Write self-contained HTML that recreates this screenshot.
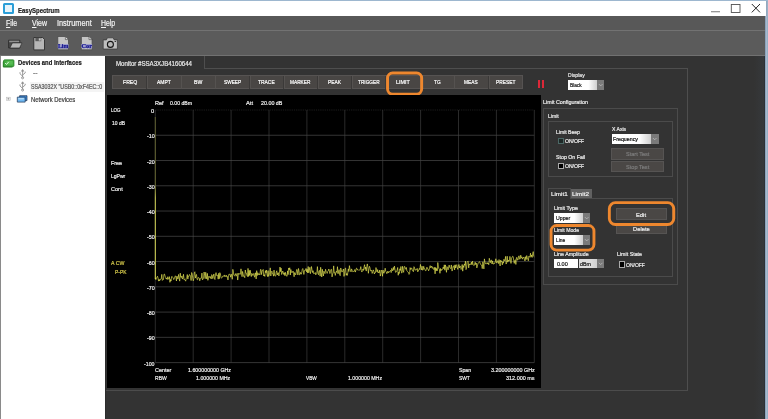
<!DOCTYPE html>
<html><head><meta charset="utf-8"><title>EasySpectrum</title>
<style>
html,body{margin:0;padding:0;}
body{width:768px;height:419px;overflow:hidden;position:relative;background:#333333;font-family:"Liberation Sans", sans-serif;}
.a{position:absolute;}
.t{white-space:nowrap;transform-origin:0 50%;-webkit-text-stroke:0.2px currentColor;}
svg{overflow:visible;display:block;}
#w{position:absolute;left:0;top:0;width:768px;height:419px;filter:blur(0.5px);}
</style></head><body>
<div id="w">
<div class="a" style="left:-8px;top:-8px;width:784px;height:435px;background:#333333;"></div>
<div class="a" style="left:-8px;top:-8px;width:784px;height:23.6px;background:#ffffff;"></div>
<div class="a" style="left:-8px;top:-8px;width:784px;height:8.8px;background:#9db7cf;"></div>
<div class="a" style="left:3px;top:3.2px;width:11px;height:10.8px;background:#e6f3fa;border:2px solid #2b9ed8;box-sizing:border-box;border-radius:1.5px;"></div>
<div class="a t" style="left:17.50px;top:6px;font-size:7px;line-height:9px;color:#222;font-weight:bold;transform:scaleX(0.8553);">EasySpectrum</div>
<svg class="a" style="left:704px;top:0" width="64" height="16" viewBox="0 0 64 16">
<line x1="7" y1="11.7" x2="16" y2="11.7" stroke="#8c8c8c" stroke-width="1.2"/>
<rect x="27.3" y="4.5" width="8.7" height="8" fill="none" stroke="#505050" stroke-width="0.9"/>
<path d="M47.8 4 L56 12.4 M56 4 L47.8 12.4" stroke="#1a1a1a" stroke-width="0.95" fill="none"/>
</svg>
<div class="a" style="left:-8px;top:15.6px;width:784px;height:15.4px;background:#585858;"></div>
<div class="a" style="left:-8px;top:30px;width:784px;height:1px;background:#727272;"></div>
<div class="a t" style="left:6.30px;top:18px;font-size:8.4px;line-height:10.4px;color:#f2f2f2;transform:scaleX(0.8287);"><u>F</u>ile</div>
<div class="a t" style="left:32.20px;top:18px;font-size:8.4px;line-height:10.4px;color:#f2f2f2;transform:scaleX(0.8326);"><u>V</u>iew</div>
<div class="a t" style="left:57.00px;top:18px;font-size:8.4px;line-height:10.4px;color:#f2f2f2;transform:scaleX(0.8767);">Instrument</div>
<div class="a t" style="left:101.30px;top:18px;font-size:8.4px;line-height:10.4px;color:#f2f2f2;transform:scaleX(0.8232);"><u>H</u>elp</div>
<div class="a" style="left:-8px;top:31px;width:784px;height:24px;background:#5b5b5b;"></div>
<div class="a" style="left:-8px;top:55px;width:784px;height:1px;background:#717171;"></div>
<svg class="a" style="left:0;top:31px" width="128" height="25" viewBox="0 31 128 25">
<path d="M8.6 40.2 H19.8 V48 H8.6 Z" fill="#484848" stroke="#2a2a2a" stroke-width="0.8"/>
<rect x="9.2" y="40.7" width="10" height="1.5" fill="#909090"/>
<path d="M9.9 48 L12.4 42.9 L22 42.9 L19.6 48 Z" fill="#b6b6b6" stroke="#2c2c2c" stroke-width="0.7" stroke-linejoin="round"/>
<path d="M33.8 37.5 L42.6 37.5 L44.5 39.4 L44.5 49.9 L33.8 49.9 Z" fill="#b6b6b6" stroke="#2c2c2c" stroke-width="0.9"/>
<rect x="35.4" y="37.8" width="5.8" height="3.4" fill="#5a5a5a"/>
<rect x="38.8" y="38.3" width="2" height="2.3" fill="#c4c4c4"/>
<path d="M57.8 36.5 L65.4 36.5 L68.5 39.6 L68.5 49.8 L57.8 49.8 Z" fill="#c4c4c4" stroke="#444" stroke-width="0.7"/>
<path d="M65.4 36.5 L65.4 39.6 L68.5 39.6 Z" fill="#e4e4e4" stroke="#444" stroke-width="0.6"/>
<rect x="57.8" y="44" width="10.7" height="4.2" fill="#9c9ccc"/>
<text x="63.15" y="48" font-family="Liberation Serif, serif" font-weight="bold" font-size="6.4" fill="#14148c" stroke="#14148c" stroke-width="0.25" text-anchor="middle" textLength="10.4" lengthAdjust="spacingAndGlyphs">Lim</text>
<path d="M81.4 36.5 L89 36.5 L92.1 39.6 L92.1 49.8 L81.4 49.8 Z" fill="#c4c4c4" stroke="#444" stroke-width="0.7"/>
<path d="M89 36.5 L89 39.6 L92.1 39.6 Z" fill="#e4e4e4" stroke="#444" stroke-width="0.6"/>
<rect x="81.4" y="44" width="10.7" height="4.2" fill="#9c9ccc"/>
<text x="86.75" y="48" font-family="Liberation Serif, serif" font-weight="bold" font-size="6.4" fill="#14148c" stroke="#14148c" stroke-width="0.25" text-anchor="middle" textLength="10.4" lengthAdjust="spacingAndGlyphs">Cor</text>
<path d="M103.2 39.9 L106.4 39.9 L107.4 37.8 L113.2 37.8 L114.2 39.9 L117.4 39.9 L117.4 49 L103.2 49 Z" fill="#bebebe" stroke="#3a3a3a" stroke-width="0.75" stroke-linejoin="round"/>
<circle cx="110.4" cy="44.4" r="3" fill="#b8b8b8" stroke="#141414" stroke-width="1.1"/>
<rect x="114.6" y="41" width="1.5" height="1" fill="#333"/>
</svg>
<div class="a" style="left:-8px;top:56px;width:112.6px;height:372px;background:#ffffff;"></div>
<div class="a" style="left:-8px;top:56px;width:9.4px;height:372px;background:#8a8a8a;"></div>
<div class="a" style="left:104.6px;top:56px;width:1px;height:372px;background:#2c2c2c;"></div>
<div class="a t" style="left:17.50px;top:59px;font-size:6.8px;line-height:8.8px;color:#1a1a1a;font-weight:bold;transform:scaleX(0.8646);">Devices and Interfaces</div>
<div class="a t" style="left:32.50px;top:69px;font-size:6.4px;line-height:8.4px;color:#777;transform:scaleX(1.0549);">--</div>
<div class="a" style="left:30px;top:81.5px;width:74px;height:10px;background:#f4f4f4;"></div>
<div class="a t" style="left:30.80px;top:83px;font-size:6.6px;line-height:8.6px;color:#555;transform:scaleX(0.8047);">SSA3032X "USB0::0xF4EC::0</div>
<div class="a t" style="left:30.80px;top:96px;font-size:6.6px;line-height:8.6px;color:#3a3a3a;transform:scaleX(0.8935);">Network Devices</div>
<svg class="a" style="left:0;top:56px" width="40" height="52" viewBox="0 56 40 52">
<rect x="2.8" y="61" width="10" height="6.4" rx="1" fill="#2f8a2f"/>
<rect x="3.6" y="59.8" width="10.4" height="6.8" rx="1" fill="#42ab3f" stroke="#2c7f2c" stroke-width="0.7"/>
<rect x="6.4" y="61" width="6.4" height="3.6" fill="#5cc058" opacity="0.8"/>
<path d="M5.2 63 L6.5 64.5 L8.8 61.8" stroke="#f0fff0" stroke-width="0.9" fill="none"/>
<g stroke="#8e8e8e" stroke-width="0.85" fill="none">
<path d="M22.6 70.6 L22.6 77.4"/><path d="M22.6 76.2 L20 73.8 L20 72.2"/><path d="M22.6 75 L25.2 72.9 L25.2 71.6"/>
<circle cx="22.6" cy="77.8" r="1.05"/>
<path d="M21.6 71.2 L22.6 69.6 L23.6 71.2 Z" fill="#8e8e8e"/>
</g>
<g stroke="#8e8e8e" stroke-width="0.85" fill="none" transform="translate(0,12.2)">
<path d="M22.6 70.6 L22.6 77.4"/><path d="M22.6 76.2 L20 73.8 L20 72.2"/><path d="M22.6 75 L25.2 72.9 L25.2 71.6"/>
<circle cx="22.6" cy="77.8" r="1.05"/>
<path d="M21.6 71.2 L22.6 69.6 L23.6 71.2 Z" fill="#8e8e8e"/>
</g>
<rect x="6.6" y="97.2" width="3.6" height="3.2" fill="#f4f4f4" stroke="#b4b4b4" stroke-width="0.5"/>
<path d="M7.4 98.8 L9.4 98.8 M8.4 97.9 L8.4 99.7" stroke="#777" stroke-width="0.5"/>
<path d="M19.6 95.7 L27 95.7 L27 100.6 L19.6 100.6 Z" fill="#3d8cdc" stroke="#1f3352" stroke-width="0.7"/>
<path d="M17.3 97.1 L25.2 97.1 L25.2 102.1 L17.3 102.1 Z" fill="#6fb8f2" stroke="#1f3352" stroke-width="0.7"/>
<rect x="18.3" y="98" width="5.6" height="1.4" fill="#c6e4fb" opacity="0.8"/>
</svg>
<div class="a" style="left:107px;top:56px;width:97.5px;height:12.6px;border-right:1px solid #4e4e4e;box-sizing:border-box;"></div>
<div class="a" style="left:204px;top:68px;width:484px;height:1px;background:#4e4e4e;"></div>
<div class="a" style="left:687px;top:68px;width:1px;height:322px;background:#4e4e4e;"></div>
<div class="a" style="left:105.6px;top:390px;width:582.4px;height:1px;background:#4c4c4c;"></div>
<div class="a t" style="left:116.00px;top:60px;font-size:6.4px;line-height:8.4px;color:#e8e8e8;transform:scaleX(0.9548);">Monitor #SSA3XJB4160644</div>
<div class="a" style="left:112.4px;top:75.2px;width:410.2px;height:14.3px;background:#494644;border:0.7px solid #565352;box-sizing:border-box;"></div>
<div class="a t" style="left:122.75px;top:79px;font-size:5.8px;line-height:7.8px;color:#ffffff;transform:scaleX(0.8846);">FREQ</div>
<div class="a" style="left:146.35000000000002px;top:75.9px;width:0.7px;height:12.9px;background:#3b3938;"></div>
<div class="a" style="left:147.05px;top:75.9px;width:0.7px;height:12.9px;background:#555250;"></div>
<div class="a t" style="left:157.00px;top:79px;font-size:5.8px;line-height:7.8px;color:#ffffff;transform:scaleX(0.8504);">AMPT</div>
<div class="a" style="left:180.5px;top:75.9px;width:0.7px;height:12.9px;background:#3b3938;"></div>
<div class="a" style="left:181.2px;top:75.9px;width:0.7px;height:12.9px;background:#555250;"></div>
<div class="a t" style="left:194.00px;top:79px;font-size:5.8px;line-height:7.8px;color:#ffffff;transform:scaleX(0.8883);">BW</div>
<div class="a" style="left:214.65px;top:75.9px;width:0.7px;height:12.9px;background:#3b3938;"></div>
<div class="a" style="left:215.35px;top:75.9px;width:0.7px;height:12.9px;background:#555250;"></div>
<div class="a t" style="left:223.80px;top:79px;font-size:5.8px;line-height:7.8px;color:#ffffff;transform:scaleX(0.8215);">SWEEP</div>
<div class="a" style="left:248.8px;top:75.9px;width:0.7px;height:12.9px;background:#3b3938;"></div>
<div class="a" style="left:249.5px;top:75.9px;width:0.7px;height:12.9px;background:#555250;"></div>
<div class="a t" style="left:258.30px;top:79px;font-size:5.8px;line-height:7.8px;color:#ffffff;transform:scaleX(0.8496);">TRACE</div>
<div class="a" style="left:282.94999999999993px;top:75.9px;width:0.7px;height:12.9px;background:#3b3938;"></div>
<div class="a" style="left:283.65px;top:75.9px;width:0.7px;height:12.9px;background:#555250;"></div>
<div class="a t" style="left:290.00px;top:79px;font-size:5.8px;line-height:7.8px;color:#ffffff;transform:scaleX(0.8222);">MARKER</div>
<div class="a" style="left:317.0999999999999px;top:75.9px;width:0.7px;height:12.9px;background:#3b3938;"></div>
<div class="a" style="left:317.79999999999995px;top:75.9px;width:0.7px;height:12.9px;background:#555250;"></div>
<div class="a t" style="left:328.00px;top:79px;font-size:5.8px;line-height:7.8px;color:#ffffff;transform:scaleX(0.8404);">PEAK</div>
<div class="a" style="left:351.24999999999994px;top:75.9px;width:0.7px;height:12.9px;background:#3b3938;"></div>
<div class="a" style="left:351.95px;top:75.9px;width:0.7px;height:12.9px;background:#555250;"></div>
<div class="a t" style="left:358.00px;top:79px;font-size:5.8px;line-height:7.8px;color:#ffffff;transform:scaleX(0.8175);">TRIGGER</div>
<div class="a" style="left:385.4px;top:75.9px;width:0.7px;height:12.9px;background:#3b3938;"></div>
<div class="a" style="left:386.1px;top:75.9px;width:0.7px;height:12.9px;background:#555250;"></div>
<div class="a t" style="left:396.25px;top:79px;font-size:5.8px;line-height:7.8px;color:#ffffff;transform:scaleX(0.9408);">LIMIT</div>
<div class="a" style="left:419.54999999999995px;top:75.9px;width:0.7px;height:12.9px;background:#3b3938;"></div>
<div class="a" style="left:420.25px;top:75.9px;width:0.7px;height:12.9px;background:#555250;"></div>
<div class="a t" style="left:433.75px;top:79px;font-size:5.8px;line-height:7.8px;color:#ffffff;transform:scaleX(0.8248);">TG</div>
<div class="a" style="left:453.69999999999993px;top:75.9px;width:0.7px;height:12.9px;background:#3b3938;"></div>
<div class="a" style="left:454.4px;top:75.9px;width:0.7px;height:12.9px;background:#555250;"></div>
<div class="a t" style="left:464.40px;top:79px;font-size:5.8px;line-height:7.8px;color:#ffffff;transform:scaleX(0.8274);">MEAS</div>
<div class="a" style="left:487.8499999999999px;top:75.9px;width:0.7px;height:12.9px;background:#3b3938;"></div>
<div class="a" style="left:488.54999999999995px;top:75.9px;width:0.7px;height:12.9px;background:#555250;"></div>
<div class="a t" style="left:495.60px;top:79px;font-size:5.8px;line-height:7.8px;color:#ffffff;transform:scaleX(0.8361);">PRESET</div>
<svg class="a" style="left:0;top:0" width="768" height="419" viewBox="0 0 768 419"><rect x="387.55" y="73.05" width="34.10" height="21.10" rx="5.05" fill="none" stroke="#ee872e" stroke-width="2.9"/></svg>
<div class="a" style="left:537.5px;top:79.6px;width:2.3px;height:8.6px;background:#dc2838;"></div>
<div class="a" style="left:541.7px;top:79.6px;width:2.3px;height:8.6px;background:#dc2838;"></div>
<div class="a t" style="left:568.00px;top:71px;font-size:6.2px;line-height:8.2px;color:#e8e8e8;transform:scaleX(0.8228);">Display</div>
<div class="a" style="left:568px;top:80.3px;width:28.6px;height:10px;background:linear-gradient(90deg,#ffffff 70%,#d0d0d0 100%);"></div>
<div class="a" style="left:596.6px;top:80.3px;width:7.4px;height:10px;background:#7a7a7a;"></div>
<svg class="a" style="left:596.6px;top:80.3px" width="7.4" height="10" viewBox="0 0 7.4 10"><path d="M1.9000000000000001 4.1 L3.7 5.9 L5.5 4.1" stroke="#bdbdbd" stroke-width="0.8" fill="none"/></svg>
<div class="a t" style="left:570.00px;top:81px;font-size:6px;line-height:8px;color:#111;transform:scaleX(0.7974);">Black</div>
<div class="a" style="left:106.8px;top:95px;width:434.2px;height:292.6px;background:#000;"></div>
<svg class="a" style="left:107px;top:95px" width="434" height="293" viewBox="107 95 434 293"><line x1="155.30" y1="110.0" x2="155.30" y2="362.6" stroke="#444444" stroke-width="0.62"/><line x1="155.3" y1="110.00" x2="534.3" y2="110.00" stroke="#303030" stroke-width="0.6" stroke-dasharray="1.2 1"/><line x1="193.20" y1="110.0" x2="193.20" y2="362.6" stroke="#444444" stroke-width="0.62"/><line x1="155.3" y1="135.26" x2="534.3" y2="135.26" stroke="#505050" stroke-width="0.65"/><line x1="231.10" y1="110.0" x2="231.10" y2="362.6" stroke="#444444" stroke-width="0.62"/><line x1="155.3" y1="160.52" x2="534.3" y2="160.52" stroke="#505050" stroke-width="0.65"/><line x1="269.00" y1="110.0" x2="269.00" y2="362.6" stroke="#444444" stroke-width="0.62"/><line x1="155.3" y1="185.78" x2="534.3" y2="185.78" stroke="#505050" stroke-width="0.65"/><line x1="306.90" y1="110.0" x2="306.90" y2="362.6" stroke="#444444" stroke-width="0.62"/><line x1="155.3" y1="211.04" x2="534.3" y2="211.04" stroke="#505050" stroke-width="0.65"/><line x1="344.80" y1="110.0" x2="344.80" y2="362.6" stroke="#444444" stroke-width="0.62"/><line x1="155.3" y1="236.30" x2="534.3" y2="236.30" stroke="#505050" stroke-width="0.65"/><line x1="382.70" y1="110.0" x2="382.70" y2="362.6" stroke="#444444" stroke-width="0.62"/><line x1="155.3" y1="261.56" x2="534.3" y2="261.56" stroke="#505050" stroke-width="0.65"/><line x1="420.60" y1="110.0" x2="420.60" y2="362.6" stroke="#444444" stroke-width="0.62"/><line x1="155.3" y1="286.82" x2="534.3" y2="286.82" stroke="#505050" stroke-width="0.65"/><line x1="458.50" y1="110.0" x2="458.50" y2="362.6" stroke="#444444" stroke-width="0.62"/><line x1="155.3" y1="312.08" x2="534.3" y2="312.08" stroke="#505050" stroke-width="0.65"/><line x1="496.40" y1="110.0" x2="496.40" y2="362.6" stroke="#444444" stroke-width="0.62"/><line x1="155.3" y1="337.34" x2="534.3" y2="337.34" stroke="#505050" stroke-width="0.65"/><line x1="534.30" y1="110.0" x2="534.30" y2="362.6" stroke="#444444" stroke-width="0.62"/><line x1="155.3" y1="362.60" x2="534.3" y2="362.60" stroke="#505050" stroke-width="0.65"/><defs><linearGradient id="sg" gradientUnits="userSpaceOnUse" x1="0" y1="117" x2="0" y2="279"><stop offset="0" stop-color="#5c5c2e"/><stop offset="0.42" stop-color="#66662f"/><stop offset="0.5" stop-color="#d2d254"/><stop offset="1" stop-color="#dede58"/></linearGradient></defs><rect x="154.8" y="117" width="1" height="162" fill="url(#sg)"/><polyline points="155.30,277.88 155.84,279.71 156.38,277.93 156.93,277.71 157.47,276.22 158.01,277.93 158.55,281.10 159.10,279.44 159.64,280.90 160.18,278.99 160.72,279.33 161.26,278.82 161.81,274.37 162.35,280.41 162.89,279.56 163.43,279.53 163.98,274.26 164.52,274.12 165.06,276.16 165.60,277.16 166.14,279.01 166.69,278.16 167.23,279.51 167.77,276.70 168.31,278.97 168.86,279.17 169.40,276.63 169.94,282.32 170.48,279.53 171.02,281.05 171.57,276.68 172.11,276.38 172.65,277.32 173.19,277.88 173.73,279.64 174.28,278.71 174.82,277.03 175.36,275.80 175.90,276.83 176.45,281.00 176.99,276.12 177.53,278.64 178.07,279.06 178.61,274.45 179.16,278.13 179.70,281.14 180.24,273.15 180.78,277.19 181.33,277.68 181.87,275.95 182.41,279.07 182.95,277.70 183.49,274.31 184.04,279.78 184.58,279.38 185.12,280.01 185.66,281.17 186.21,278.56 186.75,277.95 187.29,274.52 187.83,279.09 188.37,276.11 188.92,276.47 189.46,274.49 190.00,275.18 190.54,276.20 191.09,280.54 191.63,272.54 192.17,273.89 192.71,277.94 193.25,280.80 193.80,278.70 194.34,272.72 194.88,271.76 195.42,278.09 195.97,275.43 196.51,274.49 197.05,279.49 197.59,279.76 198.13,277.47 198.68,277.66 199.22,278.08 199.76,280.84 200.30,278.47 200.85,278.19 201.39,278.22 201.93,273.11 202.47,279.91 203.01,279.09 203.56,278.03 204.10,271.99 204.64,275.17 205.18,278.68 205.72,272.27 206.27,276.14 206.81,278.99 207.35,273.36 207.89,280.34 208.44,277.76 208.98,276.04 209.52,277.14 210.06,277.89 210.60,276.58 211.15,279.01 211.69,274.63 212.23,275.19 212.77,278.65 213.32,276.18 213.86,273.96 214.40,278.31 214.94,279.52 215.48,274.90 216.03,272.62 216.57,275.57 217.11,275.50 217.65,275.11 218.20,279.16 218.74,273.29 219.28,278.74 219.82,272.63 220.36,273.75 220.91,277.12 221.45,278.28 221.99,277.60 222.53,276.33 223.08,275.80 223.62,275.79 224.16,276.77 224.70,274.93 225.24,275.98 225.79,276.66 226.33,275.25 226.87,277.04 227.41,276.53 227.96,279.96 228.50,275.88 229.04,274.04 229.58,274.13 230.12,274.96 230.67,277.18 231.21,274.12 231.75,275.82 232.29,279.27 232.84,269.33 233.38,272.10 233.92,275.35 234.46,275.69 235.00,275.27 235.55,273.63 236.09,276.21 236.63,275.28 237.17,273.32 237.71,280.04 238.26,275.36 238.80,273.14 239.34,274.20 239.88,273.87 240.43,274.22 240.97,268.84 241.51,273.14 242.05,276.70 242.59,271.44 243.14,274.05 243.68,276.47 244.22,276.20 244.76,277.69 245.31,270.00 245.85,273.20 246.39,273.20 246.93,275.48 247.47,276.57 248.02,268.42 248.56,276.50 249.10,270.38 249.64,275.46 250.19,270.21 250.73,274.18 251.27,276.59 251.81,273.33 252.35,274.12 252.90,275.54 253.44,273.93 253.98,273.35 254.52,277.21 255.07,276.01 255.61,272.76 256.15,278.93 256.69,270.65 257.23,275.56 257.78,272.70 258.32,273.62 258.86,274.96 259.40,273.77 259.95,274.74 260.49,269.51 261.03,269.52 261.57,274.58 262.11,270.76 262.66,270.58 263.20,269.48 263.74,276.01 264.28,274.73 264.83,276.45 265.37,270.63 265.91,272.85 266.45,270.08 266.99,274.62 267.54,276.56 268.08,270.58 268.62,276.43 269.16,275.02 269.70,272.19 270.25,267.87 270.79,275.97 271.33,272.36 271.87,271.14 272.42,273.54 272.96,273.56 273.50,276.17 274.04,270.12 274.58,275.30 275.13,276.14 275.67,276.05 276.21,272.13 276.75,270.77 277.30,275.00 277.84,272.82 278.38,272.84 278.92,275.96 279.46,271.90 280.01,267.03 280.55,271.60 281.09,268.08 281.63,274.49 282.18,273.28 282.72,271.05 283.26,272.49 283.80,274.51 284.34,272.69 284.89,275.68 285.43,272.35 285.97,274.99 286.51,276.07 287.06,276.35 287.60,270.87 288.14,274.59 288.68,267.97 289.22,269.87 289.77,267.76 290.31,275.03 290.85,269.50 291.39,272.43 291.94,271.99 292.48,272.38 293.02,271.03 293.56,273.00 294.10,276.74 294.65,272.54 295.19,273.71 295.73,274.83 296.27,271.95 296.82,269.40 297.36,271.08 297.90,274.99 298.44,268.46 298.98,270.97 299.53,274.82 300.07,274.30 300.61,272.39 301.15,274.28 301.69,272.72 302.24,269.47 302.78,268.52 303.32,270.72 303.86,274.44 304.41,270.84 304.95,270.01 305.49,270.30 306.03,268.45 306.57,271.82 307.12,269.25 307.66,272.93 308.20,266.53 308.74,272.79 309.29,270.44 309.83,267.30 310.37,273.67 310.91,271.25 311.45,266.53 312.00,269.76 312.54,272.53 313.08,270.71 313.62,273.66 314.17,273.56 314.71,273.34 315.25,272.50 315.79,274.89 316.33,273.25 316.88,272.72 317.42,266.61 317.96,273.74 318.50,274.71 319.05,270.83 319.59,270.39 320.13,276.16 320.67,267.28 321.21,272.62 321.76,276.99 322.30,269.26 322.84,273.13 323.38,276.00 323.93,271.18 324.47,272.81 325.01,273.63 325.55,269.28 326.09,271.24 326.64,272.15 327.18,273.42 327.72,271.36 328.26,270.97 328.81,268.99 329.35,270.56 329.89,273.56 330.43,271.66 330.97,269.36 331.52,269.39 332.06,276.90 332.60,274.13 333.14,272.92 333.68,265.89 334.23,272.88 334.77,272.54 335.31,275.42 335.85,272.40 336.40,271.21 336.94,272.62 337.48,266.69 338.02,273.84 338.56,272.13 339.11,269.66 339.65,274.52 340.19,275.68 340.73,267.97 341.28,269.73 341.82,272.02 342.36,271.76 342.90,270.36 343.44,268.97 343.99,276.40 344.53,273.79 345.07,268.43 345.61,268.01 346.16,275.27 346.70,273.50 347.24,275.44 347.78,272.95 348.32,268.86 348.87,271.52 349.41,265.65 349.95,268.98 350.49,270.58 351.04,271.92 351.58,268.86 352.12,270.25 352.66,271.60 353.20,271.34 353.75,271.91 354.29,270.83 354.83,269.49 355.37,272.10 355.92,270.27 356.46,268.11 357.00,268.54 357.54,269.98 358.08,269.66 358.63,270.25 359.17,269.81 359.71,270.18 360.25,269.38 360.79,266.62 361.34,270.60 361.88,272.06 362.42,270.51 362.96,268.96 363.51,270.43 364.05,266.98 364.59,264.69 365.13,269.35 365.67,267.03 366.22,271.09 366.76,266.76 367.30,263.91 367.84,266.96 368.39,273.29 368.93,268.64 369.47,266.32 370.01,267.82 370.55,270.95 371.10,270.94 371.64,270.22 372.18,273.41 372.72,271.59 373.27,269.89 373.81,271.42 374.35,274.01 374.89,272.42 375.43,272.60 375.98,267.59 376.52,269.88 377.06,272.04 377.60,269.62 378.15,272.95 378.69,271.86 379.23,272.66 379.77,270.02 380.31,276.08 380.86,273.60 381.40,270.16 381.94,270.94 382.48,276.27 383.03,270.00 383.57,272.97 384.11,273.27 384.65,270.98 385.19,268.20 385.74,271.44 386.28,271.85 386.82,273.70 387.36,272.86 387.91,271.04 388.45,273.02 388.99,272.26 389.53,271.46 390.07,271.09 390.62,270.37 391.16,272.60 391.70,268.42 392.24,269.43 392.78,270.95 393.33,267.42 393.87,269.88 394.41,266.10 394.95,269.28 395.50,272.28 396.04,272.27 396.58,270.78 397.12,270.35 397.66,267.50 398.21,275.28 398.75,272.13 399.29,273.51 399.83,268.76 400.38,270.43 400.92,266.51 401.46,272.74 402.00,273.11 402.54,266.31 403.09,270.73 403.63,272.36 404.17,266.62 404.71,266.46 405.26,268.28 405.80,269.32 406.34,267.46 406.88,270.90 407.42,271.42 407.97,272.34 408.51,272.50 409.05,274.41 409.59,273.60 410.14,267.64 410.68,269.53 411.22,268.16 411.76,268.08 412.30,270.42 412.85,270.59 413.39,271.71 413.93,266.68 414.47,267.47 415.02,270.34 415.56,269.88 416.10,269.57 416.64,270.12 417.18,268.40 417.73,271.86 418.27,270.99 418.81,269.88 419.35,268.44 419.90,269.59 420.44,264.45 420.98,267.54 421.52,269.92 422.06,266.16 422.61,270.19 423.15,270.01 423.69,266.29 424.23,268.93 424.77,268.72 425.32,270.52 425.86,270.82 426.40,269.21 426.94,267.19 427.49,268.83 428.03,268.96 428.57,270.82 429.11,269.70 429.65,267.20 430.20,265.63 430.74,267.92 431.28,266.98 431.82,266.03 432.37,268.36 432.91,267.40 433.45,268.77 433.99,269.72 434.53,267.41 435.08,273.84 435.62,267.51 436.16,270.87 436.70,268.45 437.25,270.78 437.79,262.54 438.33,266.18 438.87,268.52 439.41,269.31 439.96,273.30 440.50,268.53 441.04,270.78 441.58,269.50 442.13,269.88 442.67,268.79 443.21,267.14 443.75,268.69 444.29,264.83 444.84,270.21 445.38,264.88 445.92,267.87 446.46,272.32 447.01,266.64 447.55,267.18 448.09,269.87 448.63,267.10 449.17,265.05 449.72,267.56 450.26,268.29 450.80,268.54 451.34,264.94 451.89,270.95 452.43,270.70 452.97,266.69 453.51,267.24 454.05,265.52 454.60,269.90 455.14,264.76 455.68,268.02 456.22,265.21 456.76,264.64 457.31,267.99 457.85,269.41 458.39,266.13 458.93,264.47 459.48,267.99 460.02,265.86 460.56,266.67 461.10,269.52 461.64,268.52 462.19,264.50 462.73,271.17 463.27,265.64 463.81,267.46 464.36,263.96 464.90,265.35 465.44,261.20 465.98,269.63 466.52,268.56 467.07,262.31 467.61,261.55 468.15,261.22 468.69,267.87 469.24,263.89 469.78,264.79 470.32,264.12 470.86,264.52 471.40,262.14 471.95,264.76 472.49,261.19 473.03,264.41 473.57,265.26 474.12,265.59 474.66,263.85 475.20,262.18 475.74,264.67 476.28,263.07 476.83,267.93 477.37,265.96 477.91,263.78 478.45,262.87 479.00,262.25 479.54,261.63 480.08,262.98 480.62,264.47 481.16,264.94 481.71,265.01 482.25,268.63 482.79,261.84 483.33,263.50 483.88,268.91 484.42,258.87 484.96,262.05 485.50,263.65 486.04,263.55 486.59,264.10 487.13,262.49 487.67,263.88 488.21,263.07 488.75,264.74 489.30,258.29 489.84,260.65 490.38,262.71 490.92,260.18 491.47,260.09 492.01,264.04 492.55,260.92 493.09,263.94 493.63,264.15 494.18,263.04 494.72,263.46 495.26,261.94 495.80,258.75 496.35,262.00 496.89,263.10 497.43,260.66 497.97,261.61 498.51,263.56 499.06,259.57 499.60,263.13 500.14,265.98 500.68,260.10 501.23,261.70 501.77,260.90 502.31,264.87 502.85,261.85 503.39,263.16 503.94,259.27 504.48,260.80 505.02,260.73 505.56,256.41 506.11,264.05 506.65,262.66 507.19,256.22 507.73,262.12 508.27,259.94 508.82,261.24 509.36,260.96 509.90,256.40 510.44,259.41 510.99,263.41 511.53,258.37 512.07,257.21 512.61,256.32 513.15,256.56 513.70,260.22 514.24,263.39 514.78,260.27 515.32,259.75 515.87,264.44 516.41,257.74 516.95,257.29 517.49,260.09 518.03,260.05 518.58,256.22 519.12,255.76 519.66,259.18 520.20,259.00 520.74,255.18 521.29,257.75 521.83,256.85 522.37,259.17 522.91,257.70 523.46,257.69 524.00,256.96 524.54,260.26 525.08,260.98 525.62,256.68 526.17,259.51 526.71,255.57 527.25,257.48 527.79,259.02 528.34,260.77 528.88,256.14 529.42,256.79 529.96,257.36 530.50,253.21 531.05,256.76 531.59,255.01 532.13,257.44 532.67,253.76 533.22,251.64 533.76,256.39 534.30,256.84" fill="none" stroke="#ecec56" stroke-width="0.64" stroke-linejoin="round"/></svg>
<div class="a t" style="left:151.10px;top:107px;font-size:6.2px;line-height:8.2px;color:#f2f2f2;transform:scaleX(0.9267);">0</div>
<div class="a t" style="left:146.60px;top:132px;font-size:6.2px;line-height:8.2px;color:#f2f2f2;transform:scaleX(0.8600);">-10</div>
<div class="a t" style="left:146.60px;top:158px;font-size:6.2px;line-height:8.2px;color:#f2f2f2;transform:scaleX(0.8600);">-20</div>
<div class="a t" style="left:146.60px;top:183px;font-size:6.2px;line-height:8.2px;color:#f2f2f2;transform:scaleX(0.8600);">-30</div>
<div class="a t" style="left:146.60px;top:208px;font-size:6.2px;line-height:8.2px;color:#f2f2f2;transform:scaleX(0.8600);">-40</div>
<div class="a t" style="left:146.60px;top:233px;font-size:6.2px;line-height:8.2px;color:#f2f2f2;transform:scaleX(0.8600);">-50</div>
<div class="a t" style="left:146.60px;top:259px;font-size:6.2px;line-height:8.2px;color:#f2f2f2;transform:scaleX(0.8600);">-60</div>
<div class="a t" style="left:146.60px;top:284px;font-size:6.2px;line-height:8.2px;color:#f2f2f2;transform:scaleX(0.8600);">-70</div>
<div class="a t" style="left:146.60px;top:309px;font-size:6.2px;line-height:8.2px;color:#f2f2f2;transform:scaleX(0.8600);">-80</div>
<div class="a t" style="left:146.60px;top:334px;font-size:6.2px;line-height:8.2px;color:#f2f2f2;transform:scaleX(0.8600);">-90</div>
<div class="a t" style="left:143.80px;top:360px;font-size:6.2px;line-height:8.2px;color:#f2f2f2;transform:scaleX(0.8474);">-100</div>
<div class="a t" style="left:154.80px;top:99px;font-size:6.2px;line-height:8.2px;color:#f2f2f2;transform:scaleX(0.8921);">Ref</div>
<div class="a t" style="left:170.40px;top:99px;font-size:6.2px;line-height:8.2px;color:#f2f2f2;transform:scaleX(0.8345);">0.00 dBm</div>
<div class="a t" style="left:246.00px;top:99px;font-size:6.2px;line-height:8.2px;color:#f2f2f2;transform:scaleX(0.9237);">Att</div>
<div class="a t" style="left:261.00px;top:99px;font-size:6.2px;line-height:8.2px;color:#f2f2f2;transform:scaleX(0.8636);">20.00 dB</div>
<div class="a t" style="left:110.50px;top:106px;font-size:6.2px;line-height:8.2px;color:#f2f2f2;transform:scaleX(0.7264);">LOG</div>
<div class="a t" style="left:111.80px;top:119px;font-size:6.2px;line-height:8.2px;color:#f2f2f2;transform:scaleX(0.8039);">10 dB</div>
<div class="a t" style="left:110.60px;top:159px;font-size:6.2px;line-height:8.2px;color:#f2f2f2;transform:scaleX(0.8717);">Free</div>
<div class="a t" style="left:110.60px;top:172px;font-size:6.2px;line-height:8.2px;color:#f2f2f2;transform:scaleX(0.8150);">LgPwr</div>
<div class="a t" style="left:110.60px;top:185px;font-size:6.2px;line-height:8.2px;color:#f2f2f2;transform:scaleX(0.8946);">Cont</div>
<div class="a t" style="left:110.60px;top:259px;font-size:6.2px;line-height:8.2px;color:#d8cc4c;transform:scaleX(0.8474);">A CW</div>
<div class="a t" style="left:115.30px;top:269px;font-size:5.8px;line-height:7.8px;color:#d8cc4c;transform:scaleX(0.8425);">P-PK</div>
<div class="a t" style="left:154.50px;top:366px;font-size:6.2px;line-height:8.2px;color:#f2f2f2;transform:scaleX(0.8747);">Center</div>
<div class="a t" style="left:187.50px;top:366px;font-size:6.2px;line-height:8.2px;color:#f2f2f2;transform:scaleX(0.8560);">1.600000000 GHz</div>
<div class="a t" style="left:154.50px;top:374px;font-size:6.2px;line-height:8.2px;color:#f2f2f2;transform:scaleX(0.8139);">RBW</div>
<div class="a t" style="left:196.25px;top:374px;font-size:6.2px;line-height:8.2px;color:#f2f2f2;transform:scaleX(0.8509);">1.000000 MHz</div>
<div class="a t" style="left:306.25px;top:374px;font-size:6.2px;line-height:8.2px;color:#f2f2f2;transform:scaleX(0.7619);">VBW</div>
<div class="a t" style="left:348.00px;top:374px;font-size:6.2px;line-height:8.2px;color:#f2f2f2;transform:scaleX(0.8447);">1.000000 MHz</div>
<div class="a t" style="left:458.75px;top:366px;font-size:6.2px;line-height:8.2px;color:#f2f2f2;transform:scaleX(0.8337);">Span</div>
<div class="a t" style="left:491.00px;top:366px;font-size:6.2px;line-height:8.2px;color:#f2f2f2;transform:scaleX(0.8719);">3.200000000 GHz</div>
<div class="a t" style="left:458.75px;top:374px;font-size:6.2px;line-height:8.2px;color:#f2f2f2;transform:scaleX(0.7891);">SWT</div>
<div class="a t" style="left:506.25px;top:374px;font-size:6.2px;line-height:8.2px;color:#f2f2f2;transform:scaleX(0.8827);">312.000 ms</div>
<div class="a t" style="left:543.00px;top:98px;font-size:6.2px;line-height:8.2px;color:#f0f0f0;transform:scaleX(0.8722);">Limit Configuration</div>
<div class="a" style="left:543px;top:108px;width:135px;height:176.5px;border:1px solid #4b4b4b;box-sizing:border-box;"></div>
<div class="a t" style="left:548.00px;top:112px;font-size:6.2px;line-height:8.2px;color:#f0f0f0;transform:scaleX(0.8182);">Limit</div>
<div class="a" style="left:548px;top:121px;width:124.5px;height:56px;border:1px solid #4b4b4b;box-sizing:border-box;"></div>
<div class="a t" style="left:555.80px;top:128px;font-size:6.2px;line-height:8.2px;color:#f0f0f0;transform:scaleX(0.8175);">Limit Beep</div>
<div class="a" style="left:557.6px;top:138px;width:6px;height:6px;background:#1e2826;border:0.8px solid #4c6866;box-sizing:border-box;"></div>
<div class="a t" style="left:565.00px;top:137px;font-size:6px;line-height:8px;color:#f0f0f0;transform:scaleX(0.8469);">ON/OFF</div>
<div class="a t" style="left:555.80px;top:153px;font-size:6.2px;line-height:8.2px;color:#f0f0f0;transform:scaleX(0.8487);">Stop On Fail</div>
<div class="a" style="left:557.6px;top:163px;width:6px;height:6px;background:#000;border:0.8px solid #aaa;box-sizing:border-box;"></div>
<div class="a t" style="left:565.00px;top:162px;font-size:6px;line-height:8px;color:#f0f0f0;transform:scaleX(0.8469);">ON/OFF</div>
<div class="a t" style="left:611.70px;top:125px;font-size:6.2px;line-height:8.2px;color:#f0f0f0;transform:scaleX(0.8196);">X Axis</div>
<div class="a" style="left:611.6px;top:134px;width:39.6px;height:9.8px;background:linear-gradient(90deg,#ffffff 70%,#d0d0d0 100%);"></div>
<div class="a" style="left:651.2px;top:134px;width:7.4px;height:9.8px;background:#7a7a7a;"></div>
<svg class="a" style="left:651.2px;top:134px" width="7.4" height="9.8" viewBox="0 0 7.4 9.8"><path d="M1.9000000000000001 4.0 L3.7 5.800000000000001 L5.5 4.0" stroke="#bdbdbd" stroke-width="0.8" fill="none"/></svg>
<div class="a t" style="left:613.30px;top:135px;font-size:6px;line-height:8px;color:#111;transform:scaleX(0.8815);">Frequency</div>
<div class="a" style="left:611.4px;top:148.4px;width:52.8px;height:11.4px;background:#4a4745;border:1px solid #565453;box-sizing:border-box;"></div>
<div class="a t" style="left:625.80px;top:150px;font-size:6px;line-height:8px;color:#7e7e7e;transform:scaleX(0.9273);">Start Test</div>
<div class="a" style="left:611.4px;top:161px;width:52.8px;height:11.4px;background:#4a4745;border:1px solid #565453;box-sizing:border-box;"></div>
<div class="a t" style="left:625.80px;top:163px;font-size:6px;line-height:8px;color:#7e7e7e;transform:scaleX(0.9315);">Stop Test</div>
<div class="a" style="left:548px;top:198px;width:124.5px;height:79px;border:1px solid #4b4b4b;box-sizing:border-box;"></div>
<div class="a" style="left:548.4px;top:188.4px;width:22.2px;height:10.4px;background:#333333;border:1px solid #4b4b4b;box-sizing:border-box;border-bottom:none;"></div>
<div class="a" style="left:570.6px;top:189.2px;width:21px;height:9px;background:#616161;"></div>
<div class="a t" style="left:550.80px;top:190px;font-size:6.2px;line-height:8.2px;color:#f0f0f0;transform:scaleX(1.0112);">Limit1</div>
<div class="a t" style="left:572.20px;top:190px;font-size:6.2px;line-height:8.2px;color:#f0f0f0;transform:scaleX(1.0293);">Limit2</div>
<div class="a t" style="left:553.70px;top:204px;font-size:6.2px;line-height:8.2px;color:#f0f0f0;transform:scaleX(0.8472);">Limit Type</div>
<div class="a" style="left:554px;top:212.5px;width:28.6px;height:10px;background:linear-gradient(90deg,#ffffff 70%,#d0d0d0 100%);"></div>
<div class="a" style="left:582.6px;top:212.5px;width:7.4px;height:10px;background:#7a7a7a;"></div>
<svg class="a" style="left:582.6px;top:212.5px" width="7.4" height="10" viewBox="0 0 7.4 10"><path d="M1.9000000000000001 4.1 L3.7 5.9 L5.5 4.1" stroke="#bdbdbd" stroke-width="0.8" fill="none"/></svg>
<div class="a t" style="left:555.80px;top:214px;font-size:6px;line-height:8px;color:#111;transform:scaleX(0.8688);">Upper</div>
<div class="a t" style="left:553.70px;top:226px;font-size:6.2px;line-height:8.2px;color:#f0f0f0;transform:scaleX(0.8260);">Limit Mode</div>
<div class="a" style="left:554px;top:235px;width:28.6px;height:10px;background:linear-gradient(90deg,#ffffff 70%,#d0d0d0 100%);"></div>
<div class="a" style="left:582.6px;top:235px;width:7.4px;height:10px;background:#7a7a7a;"></div>
<svg class="a" style="left:582.6px;top:235px" width="7.4" height="10" viewBox="0 0 7.4 10"><path d="M1.9000000000000001 4.1 L3.7 5.9 L5.5 4.1" stroke="#bdbdbd" stroke-width="0.8" fill="none"/></svg>
<div class="a t" style="left:555.80px;top:236px;font-size:6px;line-height:8px;color:#111;transform:scaleX(0.8110);">Line</div>
<div class="a t" style="left:553.70px;top:250px;font-size:6.2px;line-height:8.2px;color:#f0f0f0;transform:scaleX(0.8523);">Line Amplitude</div>
<div class="a" style="left:554px;top:259px;width:24px;height:9.4px;background:#fff;"></div>
<div class="a t" style="left:556.70px;top:260px;font-size:6px;line-height:8px;color:#111;transform:scaleX(0.9241);">0.00</div>
<div class="a" style="left:578.8px;top:259px;width:18.0px;height:9.4px;background:linear-gradient(90deg,#dcdcdc 70%,#d0d0d0 100%);"></div>
<div class="a" style="left:596.8px;top:259px;width:7.4px;height:9.4px;background:#7a7a7a;"></div>
<svg class="a" style="left:596.8px;top:259px" width="7.4" height="9.4" viewBox="0 0 7.4 9.4"><path d="M1.9000000000000001 3.8000000000000003 L3.7 5.6000000000000005 L5.5 3.8000000000000003" stroke="#bdbdbd" stroke-width="0.8" fill="none"/></svg>
<div class="a t" style="left:580.00px;top:260px;font-size:6px;line-height:8px;color:#111;transform:scaleX(0.8749);">dBm</div>
<div class="a" style="left:615.8px;top:207.8px;width:51px;height:12.6px;background:#4a4745;border:1px solid #565453;box-sizing:border-box;"></div>
<div class="a t" style="left:636.00px;top:211px;font-size:6.2px;line-height:8.2px;color:#f0f0f0;transform:scaleX(0.9370);">Edit</div>
<div class="a" style="left:615.8px;top:223.2px;width:51px;height:11.2px;background:#4a4745;border:1px solid #565453;box-sizing:border-box;"></div>
<div class="a t" style="left:632.50px;top:225px;font-size:6.2px;line-height:8.2px;color:#f0f0f0;transform:scaleX(0.9334);">Delete</div>
<div class="a t" style="left:617.00px;top:250px;font-size:6.2px;line-height:8.2px;color:#f0f0f0;transform:scaleX(0.8552);">Limit State</div>
<div class="a" style="left:618.9px;top:261.3px;width:6.3px;height:6.3px;background:#000;border:0.8px solid #aaa;box-sizing:border-box;"></div>
<div class="a t" style="left:625.80px;top:261px;font-size:6px;line-height:8px;color:#f0f0f0;transform:scaleX(0.8336);">ON/OFF</div>
<svg class="a" style="left:0;top:0" width="768" height="419" viewBox="0 0 768 419"><rect x="609.35" y="202.65" width="64.40" height="21.90" rx="6.05" fill="none" stroke="#ee872e" stroke-width="2.9"/></svg>
<svg class="a" style="left:0;top:0" width="768" height="419" viewBox="0 0 768 419"><rect x="551.05" y="225.55" width="42.90" height="24.60" rx="5.55" fill="none" stroke="#ee872e" stroke-width="2.9"/></svg>
<div class="a" style="left:754px;top:55.6px;width:11px;height:364px;background:linear-gradient(90deg,#333333,#36393c);"></div>
<div class="a" style="left:765.6px;top:0.8px;width:2.4px;height:15px;background:linear-gradient(90deg,#8098b2,#a6bacd 50%,#93a9c1);"></div>
<div class="a" style="left:768px;top:0.8px;width:8px;height:15px;background:#93a9c1;"></div>
<div class="a" style="left:763.6px;top:56px;width:1.2px;height:371px;background:#2c3035;"></div>
<div class="a" style="left:765.3px;top:15.6px;width:2.7px;height:41px;background:linear-gradient(90deg,#8098b2,#a6bacd 50%,#93a9c1);"></div>
<div class="a" style="left:764.6px;top:56px;width:3.4px;height:371px;background:linear-gradient(90deg,#8098b2,#a6bacd 50%,#93a9c1);"></div>
<div class="a" style="left:768px;top:15.6px;width:8px;height:412px;background:#93a9c1;"></div>
</div>
</body></html>
